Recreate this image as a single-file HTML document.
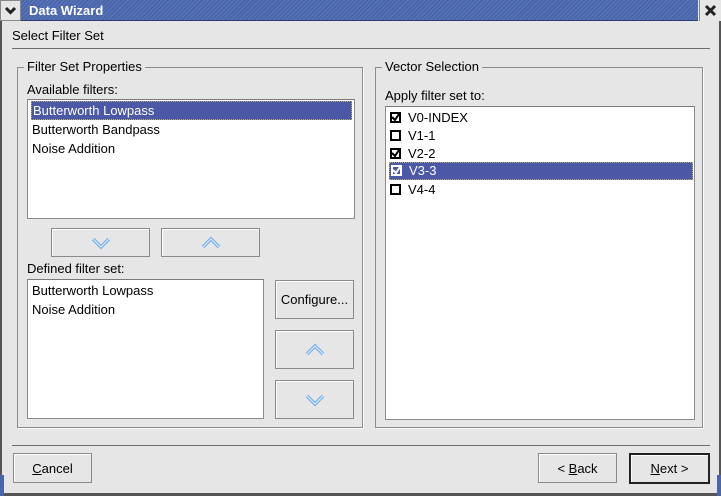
<!DOCTYPE html>
<html><head><style>
*{margin:0;padding:0;box-sizing:border-box}
body{width:721px;height:496px;background:#e6e6e6;font-family:"Liberation Sans",sans-serif;font-size:13px;color:#000;position:relative;overflow:hidden}
.a{position:absolute}
.title{left:0;top:0;width:698px;height:21px;background:repeating-linear-gradient(135deg,#5b78bc 0 1px,#4a65a8 1px 3px);border-bottom:1px solid #2a3d6e}
.title span{position:absolute;left:29px;top:3px;color:#fff;font-weight:bold;font-size:13px}
.btn{position:absolute;border:1px solid #8a8a8a;background:#e6e6e6;box-shadow:inset 1px 1px 0 #fff;display:flex;align-items:center;justify-content:center}
.grp{position:absolute;border:1px solid #8c8c8c;box-shadow:1px 1px 0 #fff}
.gl{position:absolute;background:#e6e6e6;padding:0 3px;top:-9px;left:6px}
.list{position:absolute;background:#fff;border:1px solid #8c8c8c;border-top-color:#7a7a7a}
.row{position:absolute;left:3px;height:19px;line-height:20px;padding-left:1px}
.sel{background:#4b58a5;color:#fff;border:1px dotted #b8b070;line-height:18px}
.cb{display:inline-block;width:11px;height:11px;border:2px solid #000;vertical-align:-1px;margin-right:7px;position:relative;background:#fff}
u{text-decoration:underline}
</style></head><body>
<div class="a title"><span>Data Wizard</span></div>
<div class="a" style="left:0;top:0;width:21px;height:21px;background:#e6e6e6;border:1px solid #888"><svg width="19" height="19"><path d="M5 7l4.5 4.5L14 7" stroke="#222" stroke-width="3" fill="none"/></svg></div>
<div class="a" style="left:699px;top:0;width:22px;height:21px;background:#e6e6e6;border-left:1px solid #888"><svg width="21" height="21"><path d="M6 6l9 9M15 6l-9 9" stroke="#222" stroke-width="3"/></svg></div>
<div class="a" style="left:0;top:21px;width:2px;height:475px;background:#555"></div>
<div class="a" style="left:719px;top:21px;width:2px;height:475px;background:#555"></div>
<div class="a" style="left:0;top:493px;width:721px;height:3px;background:#555"></div>
<div class="a" style="left:0;top:475px;width:4px;height:21px;background:#4a65a8"></div>
<div class="a" style="left:717px;top:475px;width:4px;height:21px;background:#4a65a8"></div>
<div class="a" style="left:12px;top:28px;font-size:13px">Select Filter Set</div>
<div class="a" style="left:12px;top:48px;width:698px;height:1px;background:#6e6e6e"></div>

<div class="grp" style="left:17px;top:67px;width:346px;height:361px"><div class="gl">Filter Set Properties</div></div>
<div class="a" style="left:27px;top:82px">Available filters:</div>
<div class="list" style="left:27px;top:99px;width:328px;height:120px">
<div class="row sel" style="top:1px;width:321px">Butterworth Lowpass</div>
<div class="row" style="top:20px">Butterworth Bandpass</div>
<div class="row" style="top:39px">Noise Addition</div>
</div>
<div class="btn" style="left:51px;top:228px;width:99px;height:29px"><svg width="22" height="16"><path d="M3 4l8 8 8-8" stroke="#7ab0e8" stroke-width="3.5" fill="none"/><path d="M3 4l8 8 8-8" stroke="#e0f0ff" stroke-width="1" fill="none"/></svg></div>
<div class="btn" style="left:161px;top:228px;width:99px;height:29px"><svg width="22" height="16"><path d="M3 12l8-8 8 8" stroke="#7ab0e8" stroke-width="3.5" fill="none"/><path d="M3 12l8-8 8 8" stroke="#e0f0ff" stroke-width="1" fill="none"/></svg></div>
<div class="a" style="left:27px;top:261px">Defined filter set:</div>
<div class="list" style="left:27px;top:279px;width:237px;height:140px">
<div class="row" style="top:1px">Butterworth Lowpass</div>
<div class="row" style="top:20px">Noise Addition</div>
</div>
<div class="btn" style="left:275px;top:280px;width:79px;height:39px">Configure...</div>
<div class="btn" style="left:275px;top:330px;width:79px;height:39px"><svg width="22" height="16"><path d="M3 12l8-8 8 8" stroke="#7ab0e8" stroke-width="3.5" fill="none"/><path d="M3 12l8-8 8 8" stroke="#e0f0ff" stroke-width="1" fill="none"/></svg></div>
<div class="btn" style="left:275px;top:380px;width:79px;height:39px"><svg width="22" height="16"><path d="M3 4l8 8 8-8" stroke="#7ab0e8" stroke-width="3.5" fill="none"/><path d="M3 4l8 8 8-8" stroke="#e0f0ff" stroke-width="1" fill="none"/></svg></div>

<div class="grp" style="left:375px;top:67px;width:328px;height:361px"><div class="gl">Vector Selection</div></div>
<div class="a" style="left:385px;top:88px">Apply filter set to:</div>
<div class="list" style="left:385px;top:106px;width:310px;height:314px">
<div class="row" style="top:1px;height:18px;line-height:19px"><span class="cb"><svg class="a" style="left:-1px;top:-1px" width="9" height="9"><path d="M1 4l3 3 4-6" stroke="#000" stroke-width="2" fill="none"/></svg></span>V0-INDEX</div>
<div class="row" style="top:19px;height:18px;line-height:19px"><span class="cb"></span>V1-1</div>
<div class="row" style="top:37px;height:18px;line-height:19px"><span class="cb"><svg class="a" style="left:-1px;top:-1px" width="9" height="9"><path d="M1 4l3 3 4-6" stroke="#000" stroke-width="2" fill="none"/></svg></span>V2-2</div>
<div class="row sel" style="top:55px;height:18px;line-height:16px;width:304px"><span class="cb" style="border-color:#fff;background:#4b58a5"><svg class="a" style="left:-1px;top:-1px" width="9" height="9"><path d="M1 4l3 3 4-6" stroke="#fff" stroke-width="2" fill="none"/></svg></span>V3-3</div>
<div class="row" style="top:73px;height:18px;line-height:19px"><span class="cb"></span>V4-4</div>
</div>

<div class="a" style="left:12px;top:445px;width:698px;height:1px;background:#6e6e6e"></div>
<div class="btn" style="left:13px;top:453px;width:79px;height:30px"><span><u>C</u>ancel</span></div>
<div class="btn" style="left:538px;top:453px;width:79px;height:30px"><span>&lt; <u>B</u>ack</span></div>
<div class="btn" style="left:629px;top:453px;width:81px;height:31px;border:2px solid #222"><span><u>N</u>ext &gt;</span></div>
</body></html>
